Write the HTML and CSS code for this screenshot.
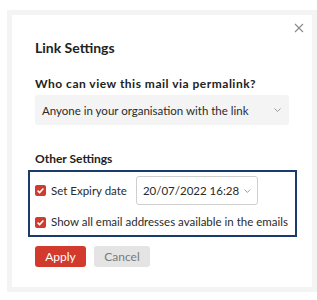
FILE: index.html
```html
<!DOCTYPE html>
<html lang="en">

<head>
    <meta charset="UTF-8">
    <meta name="viewport" content="width=device-width, initial-scale=1.0">
    <title>Link Settings</title>
    <link rel="stylesheet" href="styles.css">
</head>

<body>
    <div class="frame">
        <div class="dialog">
            <button class="close" aria-label="Close">
                <svg width="10" height="10" viewBox="0 0 10 10">
                    <path d="M1 1 L9 9 M9 1 L1 9" stroke="#8a8a8a" stroke-width="1.1" fill="none" />
                </svg>
            </button>

            <h1 class="title">Link Settings</h1>

            <h2 class="label wide">Who can view this mail via permalink?</h2>
            <div class="select">
                <span>Anyone in your organisation with the link</span>
                <svg class="chevron" width="7" height="4" viewBox="0 0 7 4">
                    <path d="M0.5 0.5 L3.5 3.5 L6.5 0.5" stroke="#999" stroke-width="1" fill="none" />
                </svg>
            </div>

            <h2 class="label other">Other Settings</h2>
            <div class="options">
                <div class="option-row">
                    <span class="checkbox">
                        <svg width="11" height="11" viewBox="0 0 11 11">
                            <path d="M2.6 5.6 L4.6 7.6 L8.4 3.4" stroke="#fff" stroke-width="1.5" fill="none" />
                        </svg>
                    </span>
                    <span class="option-text">Set Expiry date</span>
                    <div class="date-select">
                        <span>20/07/2022 16:28</span>
                        <svg class="chevron" width="7" height="4" viewBox="0 0 7 4">
                            <path d="M0.5 0.5 L3.5 3.5 L6.5 0.5" stroke="#999" stroke-width="1" fill="none" />
                        </svg>
                    </div>
                </div>
                <div class="option-row second">
                    <span class="checkbox">
                        <svg width="11" height="11" viewBox="0 0 11 11">
                            <path d="M2.6 5.6 L4.6 7.6 L8.4 3.4" stroke="#fff" stroke-width="1.5" fill="none" />
                        </svg>
                    </span>
                    <span class="option-text">Show all email addresses available in the emails</span>
                </div>
            </div>

            <div class="actions">
                <button class="btn apply">Apply</button>
                <button class="btn cancel">Cancel</button>
            </div>
        </div>
    </div>
</body>

</html>
```

FILE: styles.css
```css
/* Page */
body {
    margin: 0;
    background: #ffffff;
    font-family: Lato, 'Noto Sans', sans-serif;
    color: #222;
}

.frame {
    margin: 10px 0 0 7px;
    width: 310px;
    height: 282px;
    padding: 5px;
    box-sizing: border-box;
    background: #f4f4f4;
}

/* Dialog */
.dialog {
    position: relative;
    height: 100%;
    background: #ffffff;
    padding: 23px 23px 0 23px;
    box-sizing: border-box;
}

.close {
    position: absolute;
    top: 8px;
    right: 8px;
    width: 10px;
    height: 10px;
    padding: 0;
    border: none;
    background: none;
    display: flex;
}

.title {
    margin: 0;
    font-size: 14px;
    line-height: 20px;
    font-weight: 700;
    color: #222;
}

.label {
    margin: 18px 0 0;
    font-size: 12px;
    line-height: 16px;
    font-weight: 700;
    color: #222;
}

.label.wide {
    letter-spacing: 0.5px;
}

.label.other {
    margin-top: 26px;
}

.select {
    margin-top: 3px;
    height: 30px;
    background: #f4f4f4;
    border-radius: 3px;
    display: flex;
    align-items: center;
    justify-content: space-between;
    padding: 0 8px 0 7px;
    font-size: 11.5px;
    color: #2a2a2a;
}

/* Other settings box */
.options {
    margin: 3px -8px 0 -7px;
    border: 2px solid #1b3a6d;
    padding: 4px 5px 5px;
}

.option-row {
    display: flex;
    align-items: center;
    font-size: 11.5px;
    line-height: 16px;
    color: #2a2a2a;
    white-space: nowrap;
}

.option-row.second {
    margin-top: 9px;
}

.checkbox {
    width: 11px;
    height: 11px;
    border-radius: 2px;
    background: #d23a2e;
    display: flex;
    margin-right: 5px;
}

.date-select {
    margin-left: 9px;
    width: 122px;
    height: 29px;
    box-sizing: border-box;
    border: 1px solid #cfcfcf;
    border-radius: 3px;
    display: flex;
    align-items: center;
    gap: 5px;
    padding: 0 6px;
}

/* Buttons */
.actions {
    margin-top: 9px;
    display: flex;
    gap: 8px;
}

.btn {
    height: 21px;
    border: none;
    border-radius: 3px;
    font-family: Lato, 'Noto Sans', sans-serif;
    font-size: 12px;
    padding: 0;
}

.apply {
    width: 51px;
    background: #d13a2c;
    color: #ffffff;
}

.cancel {
    width: 56px;
    background: #e4e4e4;
    color: #7a7a7a;
}
```
